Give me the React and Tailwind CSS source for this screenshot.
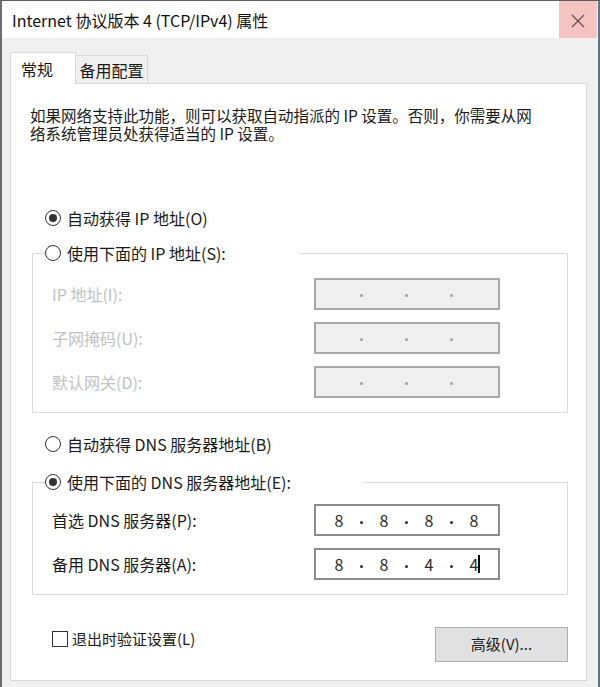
import React from 'react';

const Radio = ({ checked, label }) => (
  <div className="flex items-center h-5 whitespace-nowrap text-[16px]">
    <span className="w-4 h-4 rounded-full border border-[#333] bg-white flex items-center justify-center mr-[6px]">
      {checked && <span className="w-2 h-2 rounded-full bg-[#333]" />}
    </span>
    <span>{label}</span>
  </div>
);

const IpRow = ({ label, disabled, digits = [], cursor }) => (
  <div className="flex items-center h-[32px]">
    <span className={`w-[262px] whitespace-nowrap text-[16px] ${disabled ? 'text-[#c2c2c2]' : 'text-[#1a1a1a]'}`}>{label}</span>
    <div
      className={`w-[186px] h-[32px] border-2 flex items-center pl-[12px] ${
        disabled ? 'bg-[#f0f0f0] border-[#a9a9a9]' : 'bg-white border-[#8c8c8c]'
      }`}
    >
      {[0, 1, 2, 3].map((i) => (
        <React.Fragment key={i}>
          <span className="relative w-[22px] text-center text-[16px] leading-[20px] text-[#2a2a2a]">
            {digits[i] || ''}
            {cursor && i === 3 && (
              <span className="absolute left-[15px] top-[1px] w-[2px] h-[18px] bg-black" />
            )}
          </span>
          {i < 3 && (
            <span className="w-[23px] flex justify-center">
              <span
                className={`w-[3px] h-[3px] rounded-full ${disabled ? 'bg-[#a0a0a0] mt-[3px]' : 'bg-[#333] mt-[5px]'}`}
              />
            </span>
          )}
        </React.Fragment>
      ))}
    </div>
  </div>
);

export default function App() {
  return (
    <div className="w-[600px] h-[687px] bg-[#f0f0f0] border-t border-[#5f5f5f] border-l-2 border-l-[#6e6e6e] flex font-['Noto_Sans_CJK_SC','Noto_Sans',sans-serif] text-[15px] text-[#1a1a1a]">
      <div className="flex-1 flex flex-col">
        {/* Title bar */}
        <div className="h-[37px] bg-white flex items-center justify-between">
          <span className="pl-[10px] text-[16px] whitespace-nowrap text-[#111]">Internet 协议版本 4 (TCP/IPv4) 属性</span>
          <div className="w-[38px] h-[37px] bg-[#f6c3c3] flex items-center justify-center">
            <svg width="14" height="14" viewBox="0 0 14 14" className="mt-[3px]">
              <path d="M1 1 L13 13 M13 1 L1 13" stroke="#6b4a4a" strokeWidth="1.2" fill="none" />
            </svg>
          </div>
        </div>

        {/* Tabs */}
        <div className="flex items-start h-[31px] mt-[14px] ml-[8px] text-[16px]">
          <div className="relative z-10 w-[66px] h-[32px] bg-white border-t border-l border-r border-[#d9d9d9] flex items-center pl-[10px]">
            常规
          </div>
          <div className="w-[72px] h-[28px] mt-[3px] bg-[#f0f0f0] border-t border-r border-[#d9d9d9] flex items-center justify-center">
            备用配置
          </div>
        </div>

        {/* Panel */}
        <div className="ml-[8px] w-[577px] h-[598px] bg-white border border-[#d9d9d9] flex flex-col">
          <div className="mt-[22px] pl-[19px] whitespace-nowrap text-[15.5px] flex flex-col">
            <span className="h-[18px] leading-[18px]">如果网络支持此功能，则可以获取自动指派的 IP 设置。否则，你需要从网</span>
            <span className="h-[18px] leading-[18px]">络系统管理员处获得适当的 IP 设置。</span>
          </div>

          <div className="mt-[66px] pl-[34px]">
            <Radio checked label="自动获得 IP 地址(O)" />
          </div>

          <fieldset className="mt-[15px] ml-[21px] mr-[18px] border border-[#dcdcdc]">
            <legend className="ml-[12px] w-[255px] h-5">
              <Radio label="使用下面的 IP 地址(S):" />
            </legend>
            <div className="pl-[19px] pt-[15px] pb-[14px] flex flex-col gap-[12px]">
              <IpRow disabled label="IP 地址(I):" />
              <IpRow disabled label="子网掩码(U):" />
              <IpRow disabled label="默认网关(D):" />
            </div>
          </fieldset>

          <div className="mt-[21px] pl-[34px]">
            <Radio label="自动获得 DNS 服务器地址(B)" />
          </div>

          <fieldset className="mt-[18px] ml-[21px] mr-[18px] border border-[#dcdcdc]">
            <legend className="ml-[12px] w-[318px] h-5">
              <Radio checked label="使用下面的 DNS 服务器地址(E):" />
            </legend>
            <div className="pl-[19px] pt-[12px] pb-[14px] flex flex-col gap-[12px]">
              <IpRow label="首选 DNS 服务器(P):" digits={['8', '8', '8', '8']} />
              <IpRow label="备用 DNS 服务器(A):" digits={['8', '8', '4', '4']} cursor />
            </div>
          </fieldset>

          <div className="mt-[32px] pl-[41px] pr-[18px] flex items-start justify-between">
            <label className="flex items-center h-5 mt-[2px] whitespace-nowrap">
              <span className="w-4 h-4 border border-[#333] bg-white mr-[4px]" />
              退出时验证设置(L)
            </label>
            <button className="w-[133px] h-[35px] bg-[#e1e1e1] border border-[#adadad] text-[15px] text-[#1a1a1a]">
              高级(V)...
            </button>
          </div>
        </div>
      </div>
      <div className="w-[3px] bg-[#f7f7f7] border-r-2 border-[#5a7584]" />
    </div>
  );
}
